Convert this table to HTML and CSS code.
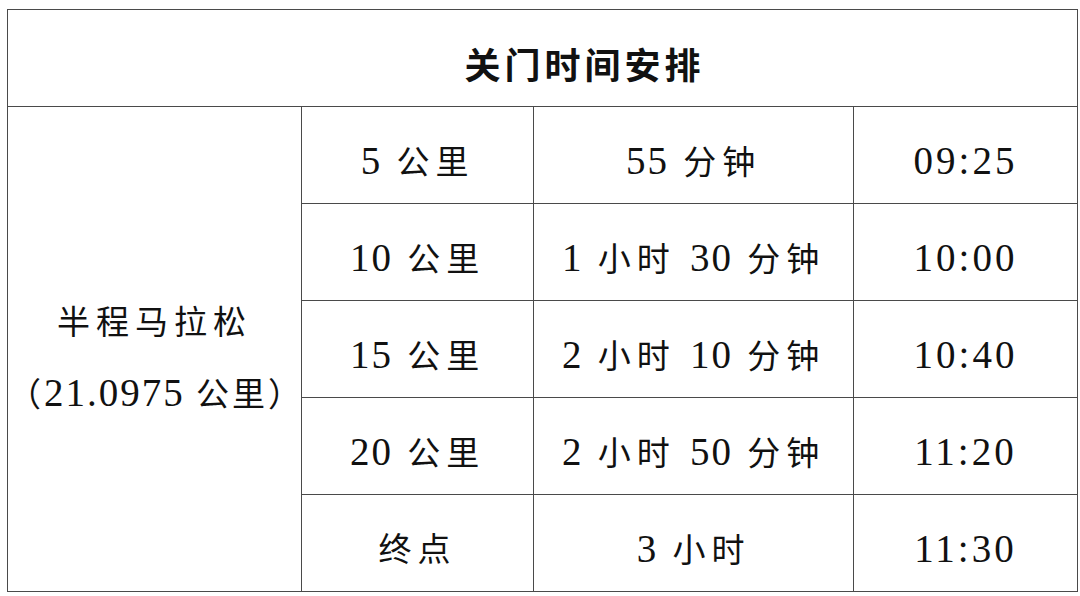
FILE: index.html
```html
<!DOCTYPE html>
<html lang="zh">
<head>
<meta charset="utf-8">
<link rel="stylesheet" href="styles.css">
</head>
<body>
<table class="sched">
  <colgroup>
    <col class="c1"><col class="c2"><col class="c3"><col class="c4">
  </colgroup>
  <tr class="head"><th colspan="4">关门时间安排</th></tr>
  <tr>
    <td rowspan="5" class="race"><div>半程马拉松</div><div class="dist">（<span class="n">21.0975</span> 公里）</div></td>
    <td><span class="n">5</span> 公里</td><td><span class="n">55</span> 分钟</td><td class="t"><span class="n">09:25</span></td>
  </tr>
  <tr><td><span class="n">10</span> 公里</td><td><span class="n">1</span> 小时 <span class="n">30</span> 分钟</td><td class="t"><span class="n">10:00</span></td></tr>
  <tr><td><span class="n">15</span> 公里</td><td><span class="n">2</span> 小时 <span class="n">10</span> 分钟</td><td class="t"><span class="n">10:40</span></td></tr>
  <tr><td><span class="n">20</span> 公里</td><td><span class="n">2</span> 小时 <span class="n">50</span> 分钟</td><td class="t"><span class="n">11:20</span></td></tr>
  <tr><td>终点</td><td><span class="n">3</span> 小时</td><td class="t"><span class="n">11:30</span></td></tr>
</table>
</body>
</html>
```
FILE: styles.css
```css
html, body {
  margin: 0;
  padding: 0;
  background: #ffffff;
}
body {
  padding: 9px 0 0 7px;
}
.sched {
  border-collapse: collapse;
  table-layout: fixed;
  width: 1070px;
  font-family: "Liberation Serif", "Noto Sans CJK SC", serif;
  color: #111;
}
.c1 { width: 294px; }
.c2 { width: 232px; }
.c3 { width: 320px; }
.c4 { width: 224px; }
.sched tr { height: 97px; }
.sched th, .sched td {
  border: 1px solid #4a4a4a;
  text-align: center;
  vertical-align: middle;
  padding: 0;
  white-space: nowrap;
}
.head th {
  font-family: "Noto Sans CJK SC", sans-serif;
  font-weight: 700;
  font-size: 36px;
  letter-spacing: 4px;
  padding-left: 84px;
  padding-top: 10px;
}
.sched td {
  font-size: 33px;
  font-weight: 400;
  letter-spacing: 6px;
  padding-top: 14px;
  line-height: 40px;
}
.n {
  font-size: 39px;
  letter-spacing: 2px;
}
.t .n {
  letter-spacing: 3px;
}
.race {
  padding-top: 20px !important;
}
.race div {
  line-height: 70px;
}
.dist {
  letter-spacing: 3px;
}
.dist .n {
  letter-spacing: 2px;
}
```
